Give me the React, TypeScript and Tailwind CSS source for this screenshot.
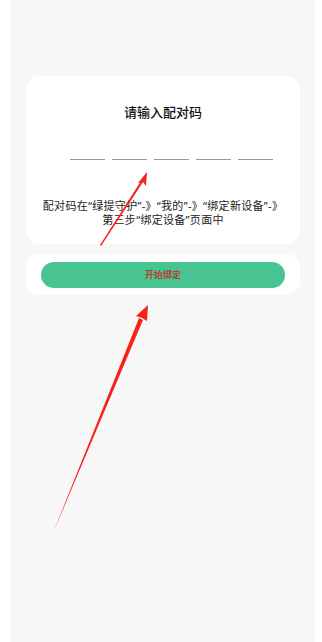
export default function App() {
  const slots = [0, 1, 2, 3, 4];

  return (
    <div className="relative w-[322px] h-[642px] bg-white font-['Noto_Sans_CJK_SC',sans-serif]">
      <div className="mx-[11px] w-[304px] h-[642px] bg-[#f7f7f7] pt-[76px] px-[15px]">
        {/* pairing code card */}
        <div className="bg-white rounded-[14px] h-[168px] flex flex-col items-center">
          <div className="mt-[26px] text-[13px] leading-[20px] font-medium text-[#111]">请输入配对码</div>
          <div className="mt-[37px] ml-[16px] flex gap-[7px]">
            {slots.map((i) => (
              <div key={i} className="w-[35px] h-px bg-[#9a9a9a]" />
            ))}
          </div>
          <div className="mt-[39px] text-[11px] leading-[14px] tracking-[0.3px] text-[#222] text-center font-['Noto_Sans','Noto_Sans_CJK_SC',sans-serif]">
            <div>配对码在“绿提守护”-》“我的”-》“绑定新设备”-》</div>
            <div>第三步“绑定设备”页面中</div>
          </div>
        </div>

        {/* action card */}
        <div className="mt-[10px] bg-white rounded-[14px] h-[41px] px-[15px] flex items-center">
          <button className="w-full h-[26px] rounded-full bg-[#48c493] text-[9px] font-bold text-[#b0452e] flex items-center justify-center">
            开始绑定
          </button>
        </div>
      </div>

      {/* annotation arrows */}
      <svg className="absolute inset-0 pointer-events-none" width="322" height="642" viewBox="0 0 322 642">
        <polygon points="100,245 141,181 143,182 101,246" fill="#f5231b" />
        <polygon points="138,183 147,172 146,186 143,182" fill="#f5231b" />
        <polygon points="53,533 139,318 143,320" fill="#f5231b" />
        <polygon points="136,316 148,305 147,321 142,318" fill="#f5231b" />
      </svg>
    </div>
  );
}
